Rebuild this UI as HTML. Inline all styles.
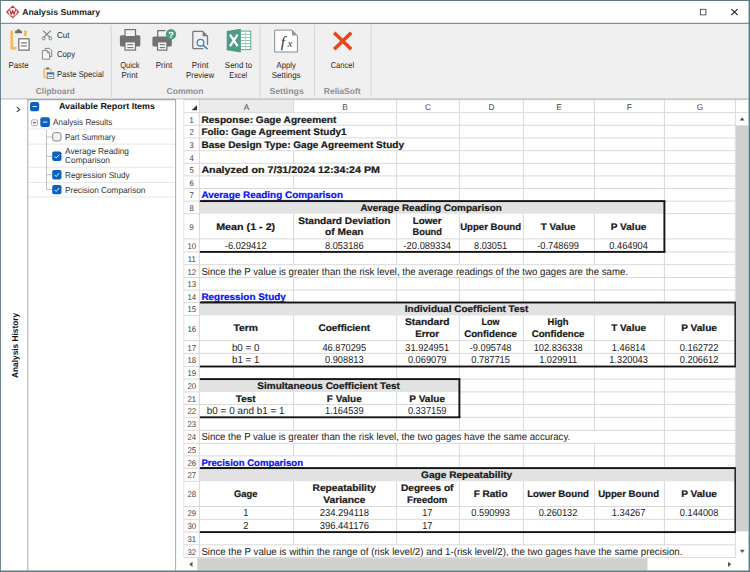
<!DOCTYPE html>
<html><head><meta charset="utf-8"><title>Analysis Summary</title>
<style>
html,body{margin:0;padding:0;background:#fff;}
body{width:750px;height:572px;overflow:hidden;font-family:"Liberation Sans",sans-serif;}
svg{display:block;font-family:"Liberation Sans",sans-serif;}
svg text{white-space:pre;text-rendering:geometricPrecision;}
</style></head><body>
<svg width="750" height="572" viewBox="0 0 750 572">
<rect x="0" y="0" width="750" height="572" fill="#ffffff"/>
<rect x="0" y="23.8" width="750" height="74.6" fill="#f0f0f0"/>
<rect x="0" y="22.8" width="750" height="1" fill="#5f7b82"/>
<rect x="0" y="98.35" width="750" height="1.1" fill="#bebebe"/>
<g id="title">
<path d="M6.75 11.95 L12.65 6.25 L18.55 11.95 L12.65 17.65 Z" fill="#f3d4d5" stroke="#c23d43" stroke-width="1.2" stroke-linejoin="round"/>
<circle cx="12.65" cy="11.95" r="3.9" fill="#fdf6f6"/>
<path d="M9.65 9.45 L11.15 14.45 L12.65 10.75 L14.15 14.45 L15.65 9.45" fill="none" stroke="#b3242b" stroke-width="1.05" stroke-linejoin="miter"/>
<text x="22.3" y="14.7" font-size="8.6" font-weight="bold" text-anchor="start" textLength="77.7" lengthAdjust="spacingAndGlyphs" fill="#1e1e1e">Analysis Summary</text>
<rect x="700.3" y="9.3" width="5.6" height="5.6" fill="none" stroke="#333" stroke-width="0.8"/>
<path d="M731.4 9.2 L737.6 15 M737.6 9.2 L731.4 15" stroke="#2a2a2a" stroke-width="1.1" fill="none"/>
</g>
<g id="ribbon">
<rect x="110.7" y="25" width="1" height="72" fill="#d4d4d4"/>
<rect x="259.4" y="25" width="1" height="72" fill="#d4d4d4"/>
<rect x="314.2" y="25" width="1" height="72" fill="#d4d4d4"/>
<rect x="370.5" y="25" width="1" height="72" fill="#d4d4d4"/>
<path d="M10.3 30.5 H13.2 V46.7 H16.4 V49.7 H10.3 Z" fill="#eebd6b"/>
<rect x="23.9" y="30.5" width="2.9" height="5.5" fill="#eebd6b"/>
<path d="M15 33.3 V31.7 Q15 30.5 16.3 30.5 H16.7 Q17 28.9 18.5 28.9 Q20 28.9 20.3 30.5 H20.7 Q22 30.5 22 31.7 V33.3 Z" fill="#6e6e6e"/>
<rect x="18.8" y="38.8" width="10.3" height="11.3" fill="#fff" stroke="#6e6e6e" stroke-width="1.2"/>
<rect x="20.9" y="42.35" width="6.1" height="1.1" fill="#6e6e6e"/>
<rect x="20.9" y="45.45" width="6.1" height="1.1" fill="#6e6e6e"/>
<text x="18.5" y="68.4" font-size="8.6" text-anchor="middle" textLength="20.2" lengthAdjust="spacingAndGlyphs" fill="#2b2b2b">Paste</text>
<path d="M43 30.6 L50.1 37.4 M50.7 30.6 L43.6 37.4" stroke="#7a7a7a" stroke-width="1.1" fill="none"/>
<circle cx="43.7" cy="38.4" r="1.5" fill="none" stroke="#7a7a7a" stroke-width="0.9"/><circle cx="50.3" cy="38.4" r="1.5" fill="none" stroke="#7a7a7a" stroke-width="0.9"/>
<text x="57" y="38.3" font-size="8.6" text-anchor="start" textLength="12.5" lengthAdjust="spacingAndGlyphs" fill="#2b2b2b">Cut</text>
<path d="M45.2 50.4 V48.4 H49.6 L51.7 50.5 V56.5 H49.8" fill="none" stroke="#7a7a7a" stroke-width="0.9"/>
<path d="M42.4 50.7 H47.5 L49.7 52.9 V59.2 H42.4 Z" fill="#f6f6f6" stroke="#7a7a7a" stroke-width="0.9"/>
<path d="M47.5 50.7 V52.9 H49.7" fill="none" stroke="#7a7a7a" stroke-width="0.8"/>
<text x="57" y="57.2" font-size="8.6" text-anchor="start" textLength="18" lengthAdjust="spacingAndGlyphs" fill="#2b2b2b">Copy</text>
<path d="M43.4 68.3 H45 V76.3 H47 V77.8 H43.4 Z" fill="#eebd6b"/>
<rect x="50.3" y="68.3" width="1.5" height="3.4" fill="#eebd6b"/>
<rect x="45.8" y="67.5" width="3.6" height="2" rx="0.6" fill="#6e6e6e"/>
<rect x="47.2" y="72.9" width="6.6" height="5.7" fill="#fff" stroke="#6e6e6e" stroke-width="0.8"/>
<rect x="46.9" y="72.5" width="7.2" height="2" fill="#3b7bc9"/>
<rect x="48.6" y="76" width="3.8" height="0.8" fill="#6e6e6e"/>
<text x="57" y="77" font-size="8.6" text-anchor="start" textLength="46.7" lengthAdjust="spacingAndGlyphs" fill="#2b2b2b">Paste Special</text>
<text x="55.3" y="94" font-size="8.6" font-weight="bold" text-anchor="middle" textLength="38.9" lengthAdjust="spacingAndGlyphs" fill="#8d9199">Clipboard</text>
<rect x="119.9" y="35.2" width="20.4" height="11.4" rx="1.6" fill="#717171"/>
<rect x="125" y="29.6" width="10.5" height="7" fill="#f0f0f0" stroke="#717171" stroke-width="1.2"/>
<rect x="125" y="41.9" width="10.5" height="8.2" fill="#f7f7f7" stroke="#717171" stroke-width="1.2"/>
<rect x="127.2" y="44.15" width="6.3" height="1.1" fill="#717171"/>
<rect x="127.2" y="47.05" width="6.3" height="1.1" fill="#717171"/>
<text x="129.9" y="68.4" font-size="8.6" text-anchor="middle" textLength="19.3" lengthAdjust="spacingAndGlyphs" fill="#2b2b2b">Quick</text>
<text x="129.6" y="77.9" font-size="8.6" text-anchor="middle" textLength="16.3" lengthAdjust="spacingAndGlyphs" fill="#2b2b2b">Print</text>
<rect x="152.4" y="36.4" width="19.4" height="10.2" rx="1.6" fill="#717171"/>
<path d="M157.7 37 V30.6 H165.5" fill="none" stroke="#717171" stroke-width="1.2"/>
<rect x="157.5" y="41.9" width="9.4" height="8.2" fill="#f7f7f7" stroke="#717171" stroke-width="1.2"/>
<rect x="159.7" y="44.15" width="5.2" height="1.1" fill="#717171"/>
<rect x="159.7" y="47.05" width="5.2" height="1.1" fill="#717171"/>
<circle cx="171" cy="34.2" r="5.2" fill="#519c86"/>
<text x="171" y="37.6" font-size="9" font-weight="bold" text-anchor="middle" fill="#fff">?</text>
<text x="164" y="68.4" font-size="8.6" text-anchor="middle" textLength="16.5" lengthAdjust="spacingAndGlyphs" fill="#2b2b2b">Print</text>
<path d="M192.8 31.4 H202.6 L207.5 36.2 V45 M203.5 48.6 H192.8 Z" fill="none" stroke="#7a7a7a" stroke-width="1.3"/>
<path d="M192.8 31.4 V48.6" stroke="#7a7a7a" stroke-width="1.3"/>
<path d="M202.6 31.4 L207.5 36.2 H202.6 Z" fill="#7a7a7a"/>
<circle cx="200.5" cy="42.7" r="3.3" fill="#f4f8fc" stroke="#4582c6" stroke-width="1.3"/>
<path d="M203 45.2 L207.6 49.2" stroke="#4582c6" stroke-width="1.6"/>
<text x="200.1" y="68.4" font-size="8.6" text-anchor="middle" textLength="16.8" lengthAdjust="spacingAndGlyphs" fill="#2b2b2b">Print</text>
<text x="200.1" y="77.9" font-size="8.6" text-anchor="middle" textLength="28" lengthAdjust="spacingAndGlyphs" fill="#2b2b2b">Preview</text>
<rect x="240" y="31.1" width="10.8" height="18.6" fill="#fff" stroke="#4c9b84" stroke-width="0.9"/>
<rect x="241" y="33.85" width="9.8" height="0.9" fill="#7fb9a7"/>
<rect x="241" y="36.95" width="9.8" height="0.9" fill="#7fb9a7"/>
<rect x="241" y="40.05" width="9.8" height="0.9" fill="#7fb9a7"/>
<rect x="241" y="43.15" width="9.8" height="0.9" fill="#7fb9a7"/>
<rect x="241" y="46.25" width="9.8" height="0.9" fill="#7fb9a7"/>
<rect x="245.2" y="31.1" width="0.8" height="18.6" fill="#a8d0c4"/>
<path d="M226.7 31.1 L240.8 28.7 V52.5 L226.7 50.2 Z" fill="#4c9b84"/>
<path d="M230 34.6 L237.6 46.2 M237.6 34.6 L230 46.2" stroke="#fff" stroke-width="2.3" fill="none"/>
<text x="238.5" y="68.4" font-size="8.6" text-anchor="middle" textLength="27.3" lengthAdjust="spacingAndGlyphs" fill="#2b2b2b">Send to</text>
<text x="238.2" y="77.9" font-size="8.6" text-anchor="middle" textLength="17.8" lengthAdjust="spacingAndGlyphs" fill="#2b2b2b">Excel</text>
<text x="185" y="94" font-size="8.6" font-weight="bold" text-anchor="middle" textLength="37" lengthAdjust="spacingAndGlyphs" fill="#8d9199">Common</text>
<path d="M274.7 30.1 H292 L297.4 35.5 V52 H274.7 Z" fill="#fff" stroke="#8a8a8a" stroke-width="1"/>
<path d="M292 30.1 L297.4 35.5 H292 Z" fill="#9a9a9a"/>
<text x="280.8" y="47.3" font-family="Liberation Serif, serif" font-style="italic" font-size="15.5" fill="#333">f</text>
<text x="287.6" y="47.3" font-family="Liberation Serif, serif" font-style="italic" font-size="11" fill="#333">x</text>
<text x="286.2" y="68.4" font-size="8.6" text-anchor="middle" textLength="19.2" lengthAdjust="spacingAndGlyphs" fill="#2b2b2b">Apply</text>
<text x="286.2" y="77.9" font-size="8.6" text-anchor="middle" textLength="28.8" lengthAdjust="spacingAndGlyphs" fill="#2b2b2b">Settings</text>
<text x="286.6" y="94" font-size="8.6" font-weight="bold" text-anchor="middle" textLength="34.4" lengthAdjust="spacingAndGlyphs" fill="#8d9199">Settings</text>
<path d="M334.2 32.8 L351.2 49.3 M351.2 32.8 L334.2 49.3" stroke="#e8461c" stroke-width="3.6" fill="none"/>
<text x="342.4" y="68.4" font-size="8.6" text-anchor="middle" textLength="23.5" lengthAdjust="spacingAndGlyphs" fill="#2b2b2b">Cancel</text>
<text x="342.2" y="94" font-size="8.6" font-weight="bold" text-anchor="middle" textLength="36.8" lengthAdjust="spacingAndGlyphs" fill="#8d9199">ReliaSoft</text>
</g>
<g id="left">
<rect x="27.3" y="99.5" width="1" height="471.2" fill="#a9a9b6"/>
<rect x="175.1" y="99.5" width="1" height="471.2" fill="#a9a9b6"/>
<rect x="27.3" y="99.2" width="148.8" height="1" fill="#9494a2"/>
<path d="M16.7 106.9 L19.7 109.4 L16.7 111.9" fill="none" stroke="#3a3a3a" stroke-width="1.1"/>
<text transform="translate(17.6 345.4) rotate(-90)" x="0" y="0" font-size="8.6" font-weight="bold" text-anchor="middle" textLength="65.3" lengthAdjust="spacingAndGlyphs" fill="#111">Analysis History</text>
<rect x="30" y="102" width="9.2" height="9.2" rx="2.2" fill="#0b60c1"/>
<rect x="32.5" y="106.15" width="4.2" height="0.9" fill="#fff"/>
<text x="107" y="109" font-size="8.6" font-weight="bold" text-anchor="middle" textLength="96" lengthAdjust="spacingAndGlyphs" fill="#111">Available Report Items</text>
<rect x="28.3" y="128.5" width="146.8" height="1" fill="#e6e6e6"/>
<rect x="28.3" y="143.6" width="146.8" height="1" fill="#e6e6e6"/>
<rect x="28.3" y="166.7" width="146.8" height="1" fill="#e6e6e6"/>
<rect x="28.3" y="181.9" width="146.8" height="1" fill="#e6e6e6"/>
<rect x="28.3" y="196.5" width="146.8" height="1" fill="#e6e6e6"/>
<rect x="31.6" y="119.8" width="5.9" height="5.9" rx="1" fill="#fbfbfb" stroke="#9b9b9b" stroke-width="0.8"/>
<rect x="33" y="122.25" width="3.1" height="1" fill="#444"/>
<rect x="40.3" y="117.3" width="9.6" height="9.6" rx="2.2" fill="#0b60c1"/>
<rect x="42.8" y="121.65" width="4.6" height="0.9" fill="#fff"/>
<text x="53" y="124.6" font-size="8.6" text-anchor="start" textLength="59.4" lengthAdjust="spacingAndGlyphs" fill="#333">Analysis Results</text>
<rect x="46.1" y="129.8" width="0.8" height="59.8" fill="#b2b2b2"/>
<rect x="46.5" y="136.6" width="5.7" height="0.8" fill="#b2b2b2"/>
<rect x="46.5" y="155.9" width="5.7" height="0.8" fill="#b2b2b2"/>
<rect x="46.5" y="174.4" width="5.7" height="0.8" fill="#b2b2b2"/>
<rect x="46.5" y="189.2" width="5.7" height="0.8" fill="#b2b2b2"/>
<rect x="52.7" y="132.7" width="8.3" height="8.3" rx="2" fill="#f1f1f1" stroke="#7d7d7d" stroke-width="0.9"/>
<text x="65" y="139.6" font-size="8.6" text-anchor="start" textLength="50.4" lengthAdjust="spacingAndGlyphs" fill="#333">Part Summary</text>
<rect x="52.2" y="151.6" width="9.3" height="9.3" rx="2" fill="#0b60c1"/>
<path d="M54.6 156.4 L56.2 158 L59.2 154.6" fill="none" stroke="#fff" stroke-width="0.9"/>
<text x="65" y="154" font-size="8.6" text-anchor="start" textLength="64" lengthAdjust="spacingAndGlyphs" fill="#333">Average Reading</text>
<text x="65" y="163.4" font-size="8.6" text-anchor="start" textLength="45" lengthAdjust="spacingAndGlyphs" fill="#333">Comparison</text>
<rect x="52.2" y="170.1" width="9.3" height="9.3" rx="2" fill="#0b60c1"/>
<path d="M54.6 174.9 L56.2 176.5 L59.2 173.1" fill="none" stroke="#fff" stroke-width="0.9"/>
<text x="65" y="177.6" font-size="8.6" text-anchor="start" textLength="64.6" lengthAdjust="spacingAndGlyphs" fill="#333">Regression Study</text>
<rect x="52.2" y="185" width="9.3" height="9.3" rx="2" fill="#0b60c1"/>
<path d="M54.6 189.8 L56.2 191.4 L59.2 188" fill="none" stroke="#fff" stroke-width="0.9"/>
<text x="65" y="192.6" font-size="8.6" text-anchor="start" textLength="80.4" lengthAdjust="spacingAndGlyphs" fill="#333">Precision Comparison</text>
</g>
<g id="sheet">
<rect x="199.4" y="100.1" width="94.2" height="12.6" fill="#ebebeb"/>
<rect x="199.4" y="201.1" width="465" height="12.6" fill="#e2e2e2"/>
<rect x="199.4" y="302.5" width="536" height="13" fill="#e2e2e2"/>
<rect x="199.4" y="379.1" width="260" height="12.8" fill="#e2e2e2"/>
<rect x="199.4" y="468.1" width="536" height="13.2" fill="#e2e2e2"/>
<rect x="183.8" y="112.2" width="564.6" height="1" fill="#d9d9d9"/>
<rect x="183.8" y="124.8" width="551.6" height="1" fill="#d9d9d9"/>
<rect x="183.8" y="137.4" width="551.6" height="1" fill="#d9d9d9"/>
<rect x="183.8" y="150.2" width="551.6" height="1" fill="#d9d9d9"/>
<rect x="183.8" y="162.8" width="551.6" height="1" fill="#d9d9d9"/>
<rect x="183.8" y="175.4" width="551.6" height="1" fill="#d9d9d9"/>
<rect x="183.8" y="188" width="551.6" height="1" fill="#d9d9d9"/>
<rect x="183.8" y="200.6" width="551.6" height="1" fill="#d9d9d9"/>
<rect x="183.8" y="213.2" width="15.6" height="1" fill="#d9d9d9"/>
<rect x="664.4" y="213.2" width="71" height="1" fill="#d9d9d9"/>
<rect x="183.8" y="238.4" width="551.6" height="1" fill="#d9d9d9"/>
<rect x="183.8" y="251.4" width="551.6" height="1" fill="#d9d9d9"/>
<rect x="183.8" y="264.2" width="551.6" height="1" fill="#d9d9d9"/>
<rect x="183.8" y="277" width="551.6" height="1" fill="#d9d9d9"/>
<rect x="183.8" y="289.6" width="551.6" height="1" fill="#d9d9d9"/>
<rect x="183.8" y="302" width="551.6" height="1" fill="#d9d9d9"/>
<rect x="183.8" y="315" width="15.6" height="1" fill="#d9d9d9"/>
<rect x="183.8" y="340.2" width="551.6" height="1" fill="#d9d9d9"/>
<rect x="183.8" y="352.9" width="551.6" height="1" fill="#d9d9d9"/>
<rect x="183.8" y="366" width="551.6" height="1" fill="#d9d9d9"/>
<rect x="183.8" y="378.6" width="551.6" height="1" fill="#d9d9d9"/>
<rect x="183.8" y="391.4" width="15.6" height="1" fill="#d9d9d9"/>
<rect x="459.4" y="391.4" width="276" height="1" fill="#d9d9d9"/>
<rect x="183.8" y="404" width="551.6" height="1" fill="#d9d9d9"/>
<rect x="183.8" y="416.8" width="551.6" height="1" fill="#d9d9d9"/>
<rect x="183.8" y="429.8" width="551.6" height="1" fill="#d9d9d9"/>
<rect x="183.8" y="442.8" width="551.6" height="1" fill="#d9d9d9"/>
<rect x="183.8" y="455.4" width="551.6" height="1" fill="#d9d9d9"/>
<rect x="183.8" y="467.6" width="551.6" height="1" fill="#d9d9d9"/>
<rect x="183.8" y="480.8" width="15.6" height="1" fill="#d9d9d9"/>
<rect x="183.8" y="506" width="551.6" height="1" fill="#d9d9d9"/>
<rect x="183.8" y="518.8" width="551.6" height="1" fill="#d9d9d9"/>
<rect x="183.8" y="531.6" width="551.6" height="1" fill="#d9d9d9"/>
<rect x="183.8" y="544.3" width="551.6" height="1" fill="#d9d9d9"/>
<rect x="183.8" y="557.1" width="551.6" height="1" fill="#d9d9d9"/>
<rect x="183.3" y="99.6" width="1" height="458" fill="#e0e0e0"/>
<rect x="198.9" y="99.6" width="1" height="458" fill="#d9d9d9"/>
<rect x="293.1" y="99.6" width="1" height="13.1" fill="#d9d9d9"/>
<rect x="293.1" y="150.7" width="1" height="12.6" fill="#d9d9d9"/>
<rect x="293.1" y="175.9" width="1" height="12.6" fill="#d9d9d9"/>
<rect x="293.1" y="213.7" width="1" height="51" fill="#d9d9d9"/>
<rect x="293.1" y="277.5" width="1" height="25" fill="#d9d9d9"/>
<rect x="293.1" y="315.5" width="1" height="63.6" fill="#d9d9d9"/>
<rect x="293.1" y="391.9" width="1" height="38.4" fill="#d9d9d9"/>
<rect x="293.1" y="443.3" width="1" height="12.6" fill="#d9d9d9"/>
<rect x="293.1" y="481.3" width="1" height="63.5" fill="#d9d9d9"/>
<rect x="396.1" y="99.6" width="1" height="13.1" fill="#d9d9d9"/>
<rect x="396.1" y="112.7" width="1" height="25.2" fill="#d9d9d9"/>
<rect x="396.1" y="150.7" width="1" height="50.4" fill="#d9d9d9"/>
<rect x="396.1" y="213.7" width="1" height="51" fill="#d9d9d9"/>
<rect x="396.1" y="277.5" width="1" height="25" fill="#d9d9d9"/>
<rect x="396.1" y="315.5" width="1" height="63.6" fill="#d9d9d9"/>
<rect x="396.1" y="391.9" width="1" height="38.4" fill="#d9d9d9"/>
<rect x="396.1" y="443.3" width="1" height="24.8" fill="#d9d9d9"/>
<rect x="396.1" y="481.3" width="1" height="63.5" fill="#d9d9d9"/>
<rect x="458.9" y="99.6" width="1" height="13.1" fill="#d9d9d9"/>
<rect x="458.9" y="112.7" width="1" height="88.4" fill="#d9d9d9"/>
<rect x="458.9" y="213.7" width="1" height="51" fill="#d9d9d9"/>
<rect x="458.9" y="277.5" width="1" height="25" fill="#d9d9d9"/>
<rect x="458.9" y="315.5" width="1" height="114.8" fill="#d9d9d9"/>
<rect x="458.9" y="443.3" width="1" height="24.8" fill="#d9d9d9"/>
<rect x="458.9" y="481.3" width="1" height="63.5" fill="#d9d9d9"/>
<rect x="522.9" y="99.6" width="1" height="13.1" fill="#d9d9d9"/>
<rect x="522.9" y="112.7" width="1" height="88.4" fill="#d9d9d9"/>
<rect x="522.9" y="213.7" width="1" height="51" fill="#d9d9d9"/>
<rect x="522.9" y="277.5" width="1" height="25" fill="#d9d9d9"/>
<rect x="522.9" y="315.5" width="1" height="114.8" fill="#d9d9d9"/>
<rect x="522.9" y="443.3" width="1" height="24.8" fill="#d9d9d9"/>
<rect x="522.9" y="481.3" width="1" height="63.5" fill="#d9d9d9"/>
<rect x="593.9" y="99.6" width="1" height="13.1" fill="#d9d9d9"/>
<rect x="593.9" y="112.7" width="1" height="88.4" fill="#d9d9d9"/>
<rect x="593.9" y="213.7" width="1" height="51" fill="#d9d9d9"/>
<rect x="593.9" y="277.5" width="1" height="25" fill="#d9d9d9"/>
<rect x="593.9" y="315.5" width="1" height="114.8" fill="#d9d9d9"/>
<rect x="593.9" y="443.3" width="1" height="24.8" fill="#d9d9d9"/>
<rect x="593.9" y="481.3" width="1" height="63.5" fill="#d9d9d9"/>
<rect x="663.9" y="99.6" width="1" height="13.1" fill="#d9d9d9"/>
<rect x="663.9" y="112.7" width="1" height="189.8" fill="#d9d9d9"/>
<rect x="663.9" y="315.5" width="1" height="152.6" fill="#d9d9d9"/>
<rect x="663.9" y="481.3" width="1" height="63.5" fill="#d9d9d9"/>
<rect x="734.9" y="99.6" width="1" height="13.1" fill="#d9d9d9"/>
<rect x="734.9" y="112.7" width="1" height="444.9" fill="#d9d9d9"/>
<rect x="183.8" y="99.1" width="564.6" height="1" fill="#c8c8c8"/>
<path d="M197 105 V110.2 H191.6 Z" fill="#333"/>
<text x="246.5" y="109.6" font-size="8.3" text-anchor="middle" textLength="5.54" lengthAdjust="spacingAndGlyphs" fill="#444">A</text>
<text x="345.1" y="109.6" font-size="8.3" text-anchor="middle" textLength="5.54" lengthAdjust="spacingAndGlyphs" fill="#444">B</text>
<text x="428" y="109.6" font-size="8.3" text-anchor="middle" textLength="5.99" lengthAdjust="spacingAndGlyphs" fill="#444">C</text>
<text x="491.4" y="109.6" font-size="8.3" text-anchor="middle" textLength="5.99" lengthAdjust="spacingAndGlyphs" fill="#444">D</text>
<text x="558.9" y="109.6" font-size="8.3" text-anchor="middle" textLength="5.54" lengthAdjust="spacingAndGlyphs" fill="#444">E</text>
<text x="629.4" y="109.6" font-size="8.3" text-anchor="middle" textLength="5.07" lengthAdjust="spacingAndGlyphs" fill="#444">F</text>
<text x="699.9" y="109.6" font-size="8.3" text-anchor="middle" textLength="6.46" lengthAdjust="spacingAndGlyphs" fill="#444">G</text>
<text x="191.7" y="122.6" font-size="8.3" text-anchor="middle" textLength="4.29" lengthAdjust="spacingAndGlyphs" fill="#3c3c3c">1</text>
<text x="191.7" y="135.2" font-size="8.3" text-anchor="middle" textLength="4.29" lengthAdjust="spacingAndGlyphs" fill="#3c3c3c">2</text>
<text x="191.7" y="147.8" font-size="8.3" text-anchor="middle" textLength="4.29" lengthAdjust="spacingAndGlyphs" fill="#3c3c3c">3</text>
<text x="191.7" y="160.6" font-size="8.3" text-anchor="middle" textLength="4.29" lengthAdjust="spacingAndGlyphs" fill="#3c3c3c">4</text>
<text x="191.7" y="173.2" font-size="8.3" text-anchor="middle" textLength="4.29" lengthAdjust="spacingAndGlyphs" fill="#3c3c3c">5</text>
<text x="191.7" y="185.8" font-size="8.3" text-anchor="middle" textLength="4.29" lengthAdjust="spacingAndGlyphs" fill="#3c3c3c">6</text>
<text x="191.7" y="198.4" font-size="8.3" text-anchor="middle" textLength="4.29" lengthAdjust="spacingAndGlyphs" fill="#3c3c3c">7</text>
<text x="191.7" y="211" font-size="8.3" text-anchor="middle" textLength="4.29" lengthAdjust="spacingAndGlyphs" fill="#3c3c3c">8</text>
<text x="191.7" y="229.7" font-size="8.3" text-anchor="middle" textLength="4.29" lengthAdjust="spacingAndGlyphs" fill="#3c3c3c">9</text>
<text x="191.7" y="248.8" font-size="8.3" text-anchor="middle" textLength="8.59" lengthAdjust="spacingAndGlyphs" fill="#3c3c3c">10</text>
<text x="191.7" y="261.8" font-size="8.3" text-anchor="middle" textLength="8.01" lengthAdjust="spacingAndGlyphs" fill="#3c3c3c">11</text>
<text x="191.7" y="274.6" font-size="8.3" text-anchor="middle" textLength="8.59" lengthAdjust="spacingAndGlyphs" fill="#3c3c3c">12</text>
<text x="191.7" y="287.4" font-size="8.3" text-anchor="middle" textLength="8.59" lengthAdjust="spacingAndGlyphs" fill="#3c3c3c">13</text>
<text x="191.7" y="300" font-size="8.3" text-anchor="middle" textLength="8.59" lengthAdjust="spacingAndGlyphs" fill="#3c3c3c">14</text>
<text x="191.7" y="312.4" font-size="8.3" text-anchor="middle" textLength="8.59" lengthAdjust="spacingAndGlyphs" fill="#3c3c3c">15</text>
<text x="191.7" y="331.5" font-size="8.3" text-anchor="middle" textLength="8.59" lengthAdjust="spacingAndGlyphs" fill="#3c3c3c">16</text>
<text x="191.7" y="350.6" font-size="8.3" text-anchor="middle" textLength="8.59" lengthAdjust="spacingAndGlyphs" fill="#3c3c3c">17</text>
<text x="191.7" y="363.3" font-size="8.3" text-anchor="middle" textLength="8.59" lengthAdjust="spacingAndGlyphs" fill="#3c3c3c">18</text>
<text x="191.7" y="376.4" font-size="8.3" text-anchor="middle" textLength="8.59" lengthAdjust="spacingAndGlyphs" fill="#3c3c3c">19</text>
<text x="191.7" y="389" font-size="8.3" text-anchor="middle" textLength="8.59" lengthAdjust="spacingAndGlyphs" fill="#3c3c3c">20</text>
<text x="191.7" y="401.8" font-size="8.3" text-anchor="middle" textLength="8.59" lengthAdjust="spacingAndGlyphs" fill="#3c3c3c">21</text>
<text x="191.7" y="414.4" font-size="8.3" text-anchor="middle" textLength="8.59" lengthAdjust="spacingAndGlyphs" fill="#3c3c3c">22</text>
<text x="191.7" y="427.2" font-size="8.3" text-anchor="middle" textLength="8.59" lengthAdjust="spacingAndGlyphs" fill="#3c3c3c">23</text>
<text x="191.7" y="440.2" font-size="8.3" text-anchor="middle" textLength="8.59" lengthAdjust="spacingAndGlyphs" fill="#3c3c3c">24</text>
<text x="191.7" y="453.2" font-size="8.3" text-anchor="middle" textLength="8.59" lengthAdjust="spacingAndGlyphs" fill="#3c3c3c">25</text>
<text x="191.7" y="465.8" font-size="8.3" text-anchor="middle" textLength="8.59" lengthAdjust="spacingAndGlyphs" fill="#3c3c3c">26</text>
<text x="191.7" y="478" font-size="8.3" text-anchor="middle" textLength="8.59" lengthAdjust="spacingAndGlyphs" fill="#3c3c3c">27</text>
<text x="191.7" y="497.3" font-size="8.3" text-anchor="middle" textLength="8.59" lengthAdjust="spacingAndGlyphs" fill="#3c3c3c">28</text>
<text x="191.7" y="516.4" font-size="8.3" text-anchor="middle" textLength="8.59" lengthAdjust="spacingAndGlyphs" fill="#3c3c3c">29</text>
<text x="191.7" y="529.2" font-size="8.3" text-anchor="middle" textLength="8.59" lengthAdjust="spacingAndGlyphs" fill="#3c3c3c">30</text>
<text x="191.7" y="542" font-size="8.3" text-anchor="middle" textLength="8.59" lengthAdjust="spacingAndGlyphs" fill="#3c3c3c">31</text>
<text x="191.7" y="554.7" font-size="8.3" text-anchor="middle" textLength="8.59" lengthAdjust="spacingAndGlyphs" fill="#3c3c3c">32</text>
<text x="201.4" y="122.5" font-size="9.5" font-weight="bold" text-anchor="start" textLength="135" lengthAdjust="spacingAndGlyphs" fill="#1a1a1a" stroke="#1a1a1a" stroke-width="0.22">Response: Gage Agreement</text>
<text x="201.4" y="135.1" font-size="9.5" font-weight="bold" text-anchor="start" textLength="145.2" lengthAdjust="spacingAndGlyphs" fill="#1a1a1a" stroke="#1a1a1a" stroke-width="0.22">Folio: Gage Agreement Study1</text>
<text x="201.4" y="147.7" font-size="9.5" font-weight="bold" text-anchor="start" textLength="202.6" lengthAdjust="spacingAndGlyphs" fill="#1a1a1a" stroke="#1a1a1a" stroke-width="0.22">Base Design Type: Gage Agreement Study</text>
<text x="201.4" y="173.1" font-size="9.5" font-weight="bold" text-anchor="start" textLength="178.6" lengthAdjust="spacingAndGlyphs" fill="#1a1a1a" stroke="#1a1a1a" stroke-width="0.22">Analyzed on 7/31/2024 12:34:24 PM</text>
<text x="201.4" y="198.3" font-size="9.5" font-weight="bold" text-anchor="start" textLength="141.6" lengthAdjust="spacingAndGlyphs" fill="#0a14f0" stroke="#0a14f0" stroke-width="0.22">Average Reading Comparison</text>
<rect x="201.4" y="199.9" width="141.6" height="0.8" fill="#0a14f0"/>
<text x="431.1" y="210.9" font-size="9.5" font-weight="bold" text-anchor="middle" textLength="141.4" lengthAdjust="spacingAndGlyphs" fill="#1a1a1a" stroke="#1a1a1a" stroke-width="0.22">Average Reading Comparison</text>
<text x="245.7" y="229.6" font-size="9.5" font-weight="bold" text-anchor="middle" textLength="59" lengthAdjust="spacingAndGlyphs" fill="#1a1a1a" stroke="#1a1a1a" stroke-width="0.22">Mean (1 - 2)</text>
<text x="344.3" y="223.5" font-size="9.5" font-weight="bold" text-anchor="middle" textLength="92.2" lengthAdjust="spacingAndGlyphs" fill="#1a1a1a" stroke="#1a1a1a" stroke-width="0.22">Standard Deviation</text>
<text x="344.3" y="235.2" font-size="9.5" font-weight="bold" text-anchor="middle" textLength="38.4" lengthAdjust="spacingAndGlyphs" fill="#1a1a1a" stroke="#1a1a1a" stroke-width="0.22">of Mean</text>
<text x="427.2" y="223.5" font-size="9.5" font-weight="bold" text-anchor="middle" textLength="29" lengthAdjust="spacingAndGlyphs" fill="#1a1a1a" stroke="#1a1a1a" stroke-width="0.22">Lower</text>
<text x="427.2" y="235.2" font-size="9.5" font-weight="bold" text-anchor="middle" textLength="29.4" lengthAdjust="spacingAndGlyphs" fill="#1a1a1a" stroke="#1a1a1a" stroke-width="0.22">Bound</text>
<text x="490.6" y="229.6" font-size="9.5" font-weight="bold" text-anchor="middle" textLength="60.9" lengthAdjust="spacingAndGlyphs" fill="#1a1a1a" stroke="#1a1a1a" stroke-width="0.22">Upper Bound</text>
<text x="558.1" y="229.6" font-size="9.5" font-weight="bold" text-anchor="middle" textLength="34.8" lengthAdjust="spacingAndGlyphs" fill="#1a1a1a" stroke="#1a1a1a" stroke-width="0.22">T Value</text>
<text x="628.6" y="229.6" font-size="9.5" font-weight="bold" text-anchor="middle" textLength="35.8" lengthAdjust="spacingAndGlyphs" fill="#1a1a1a" stroke="#1a1a1a" stroke-width="0.22">P Value</text>
<text x="245.7" y="248.7" font-size="10.2" text-anchor="middle" textLength="41.71" lengthAdjust="spacingAndGlyphs" fill="#1a1a1a">-6.029412</text>
<text x="344.3" y="248.7" font-size="10.2" text-anchor="middle" textLength="38.63" lengthAdjust="spacingAndGlyphs" fill="#1a1a1a">8.053186</text>
<text x="427.2" y="248.7" font-size="10.2" text-anchor="middle" textLength="47.4" lengthAdjust="spacingAndGlyphs" fill="#1a1a1a">-20.089334</text>
<text x="490.6" y="248.7" font-size="10.2" text-anchor="middle" textLength="33" lengthAdjust="spacingAndGlyphs" fill="#1a1a1a">8.03051</text>
<text x="558.1" y="248.7" font-size="10.2" text-anchor="middle" textLength="41.71" lengthAdjust="spacingAndGlyphs" fill="#1a1a1a">-0.748699</text>
<text x="628.6" y="248.7" font-size="10.2" text-anchor="middle" textLength="38.63" lengthAdjust="spacingAndGlyphs" fill="#1a1a1a">0.464904</text>
<text x="201.4" y="274.5" font-size="10.2" text-anchor="start" textLength="426.6" lengthAdjust="spacingAndGlyphs" fill="#1a1a1a">Since the P value is greater than the risk level, the average readings of the two gages are the same.</text>
<text x="201.4" y="299.9" font-size="9.5" font-weight="bold" text-anchor="start" textLength="84.4" lengthAdjust="spacingAndGlyphs" fill="#0a14f0" stroke="#0a14f0" stroke-width="0.22">Regression Study</text>
<rect x="201.4" y="301.5" width="84.4" height="0.8" fill="#0a14f0"/>
<text x="466.6" y="312.3" font-size="9.5" font-weight="bold" text-anchor="middle" textLength="123.6" lengthAdjust="spacingAndGlyphs" fill="#1a1a1a" stroke="#1a1a1a" stroke-width="0.22">Individual Coefficient Test</text>
<text x="245.7" y="331.4" font-size="9.5" font-weight="bold" text-anchor="middle" textLength="24.6" lengthAdjust="spacingAndGlyphs" fill="#1a1a1a" stroke="#1a1a1a" stroke-width="0.22">Term</text>
<text x="344.3" y="331.4" font-size="9.5" font-weight="bold" text-anchor="middle" textLength="51.6" lengthAdjust="spacingAndGlyphs" fill="#1a1a1a" stroke="#1a1a1a" stroke-width="0.22">Coefficient</text>
<text x="427.2" y="325.3" font-size="9.5" font-weight="bold" text-anchor="middle" textLength="44.4" lengthAdjust="spacingAndGlyphs" fill="#1a1a1a" stroke="#1a1a1a" stroke-width="0.22">Standard</text>
<text x="427.2" y="337" font-size="9.5" font-weight="bold" text-anchor="middle" textLength="24" lengthAdjust="spacingAndGlyphs" fill="#1a1a1a" stroke="#1a1a1a" stroke-width="0.22">Error</text>
<text x="490.6" y="325.3" font-size="9.5" font-weight="bold" text-anchor="middle" textLength="18" lengthAdjust="spacingAndGlyphs" fill="#1a1a1a" stroke="#1a1a1a" stroke-width="0.22">Low</text>
<text x="490.6" y="337" font-size="9.5" font-weight="bold" text-anchor="middle" textLength="52.8" lengthAdjust="spacingAndGlyphs" fill="#1a1a1a" stroke="#1a1a1a" stroke-width="0.22">Confidence</text>
<text x="558.1" y="325.3" font-size="9.5" font-weight="bold" text-anchor="middle" textLength="21" lengthAdjust="spacingAndGlyphs" fill="#1a1a1a" stroke="#1a1a1a" stroke-width="0.22">High</text>
<text x="558.1" y="337" font-size="9.5" font-weight="bold" text-anchor="middle" textLength="52.8" lengthAdjust="spacingAndGlyphs" fill="#1a1a1a" stroke="#1a1a1a" stroke-width="0.22">Confidence</text>
<text x="628.6" y="331.4" font-size="9.5" font-weight="bold" text-anchor="middle" textLength="34.8" lengthAdjust="spacingAndGlyphs" fill="#1a1a1a" stroke="#1a1a1a" stroke-width="0.22">T Value</text>
<text x="699.1" y="331.4" font-size="9.5" font-weight="bold" text-anchor="middle" textLength="35.8" lengthAdjust="spacingAndGlyphs" fill="#1a1a1a" stroke="#1a1a1a" stroke-width="0.22">P Value</text>
<text x="245.7" y="350.5" font-size="10.2" text-anchor="middle" textLength="27.6" lengthAdjust="spacingAndGlyphs" fill="#1a1a1a">b0 = 0</text>
<text x="344.3" y="350.5" font-size="10.2" text-anchor="middle" textLength="43.78" lengthAdjust="spacingAndGlyphs" fill="#1a1a1a">46.870295</text>
<text x="427.2" y="350.5" font-size="10.2" text-anchor="middle" textLength="43.78" lengthAdjust="spacingAndGlyphs" fill="#1a1a1a">31.924951</text>
<text x="490.6" y="350.5" font-size="10.2" text-anchor="middle" textLength="41.71" lengthAdjust="spacingAndGlyphs" fill="#1a1a1a">-9.095748</text>
<text x="558.1" y="350.5" font-size="10.2" text-anchor="middle" textLength="48.9" lengthAdjust="spacingAndGlyphs" fill="#1a1a1a">102.836338</text>
<text x="628.6" y="350.5" font-size="10.2" text-anchor="middle" textLength="33.6" lengthAdjust="spacingAndGlyphs" fill="#1a1a1a">1.46814</text>
<text x="699.1" y="350.5" font-size="10.2" text-anchor="middle" textLength="38.63" lengthAdjust="spacingAndGlyphs" fill="#1a1a1a">0.162722</text>
<text x="245.7" y="363.2" font-size="10.2" text-anchor="middle" textLength="27.2" lengthAdjust="spacingAndGlyphs" fill="#1a1a1a">b1 = 1</text>
<text x="344.3" y="363.2" font-size="10.2" text-anchor="middle" textLength="38.63" lengthAdjust="spacingAndGlyphs" fill="#1a1a1a">0.908813</text>
<text x="427.2" y="363.2" font-size="10.2" text-anchor="middle" textLength="38.63" lengthAdjust="spacingAndGlyphs" fill="#1a1a1a">0.069079</text>
<text x="490.6" y="363.2" font-size="10.2" text-anchor="middle" textLength="38.63" lengthAdjust="spacingAndGlyphs" fill="#1a1a1a">0.787715</text>
<text x="558.1" y="363.2" font-size="10.2" text-anchor="middle" textLength="37.94" lengthAdjust="spacingAndGlyphs" fill="#1a1a1a">1.029911</text>
<text x="628.6" y="363.2" font-size="10.2" text-anchor="middle" textLength="38.63" lengthAdjust="spacingAndGlyphs" fill="#1a1a1a">1.320043</text>
<text x="699.1" y="363.2" font-size="10.2" text-anchor="middle" textLength="38.63" lengthAdjust="spacingAndGlyphs" fill="#1a1a1a">0.206612</text>
<text x="328.6" y="388.9" font-size="9.5" font-weight="bold" text-anchor="middle" textLength="142.6" lengthAdjust="spacingAndGlyphs" fill="#1a1a1a" stroke="#1a1a1a" stroke-width="0.22">Simultaneous Coefficient Test</text>
<text x="245.7" y="401.7" font-size="9.5" font-weight="bold" text-anchor="middle" textLength="19.8" lengthAdjust="spacingAndGlyphs" fill="#1a1a1a" stroke="#1a1a1a" stroke-width="0.22">Test</text>
<text x="344.3" y="401.7" font-size="9.5" font-weight="bold" text-anchor="middle" textLength="34.9" lengthAdjust="spacingAndGlyphs" fill="#1a1a1a" stroke="#1a1a1a" stroke-width="0.22">F Value</text>
<text x="427.2" y="401.7" font-size="9.5" font-weight="bold" text-anchor="middle" textLength="35.8" lengthAdjust="spacingAndGlyphs" fill="#1a1a1a" stroke="#1a1a1a" stroke-width="0.22">P Value</text>
<text x="245.7" y="414.3" font-size="10.2" text-anchor="middle" textLength="77.8" lengthAdjust="spacingAndGlyphs" fill="#1a1a1a">b0 = 0 and b1 = 1</text>
<text x="344.3" y="414.3" font-size="10.2" text-anchor="middle" textLength="38.63" lengthAdjust="spacingAndGlyphs" fill="#1a1a1a">1.164539</text>
<text x="427.2" y="414.3" font-size="10.2" text-anchor="middle" textLength="38.63" lengthAdjust="spacingAndGlyphs" fill="#1a1a1a">0.337159</text>
<text x="201.4" y="440.1" font-size="10.2" text-anchor="start" textLength="368.8" lengthAdjust="spacingAndGlyphs" fill="#1a1a1a">Since the P value is greater than the risk level, the two gages have the same accuracy.</text>
<text x="201.4" y="465.7" font-size="9.5" font-weight="bold" text-anchor="start" textLength="101.6" lengthAdjust="spacingAndGlyphs" fill="#0a14f0" stroke="#0a14f0" stroke-width="0.22">Precision Comparison</text>
<rect x="201.4" y="467.3" width="101.6" height="0.8" fill="#0a14f0"/>
<text x="466.6" y="477.9" font-size="9.5" font-weight="bold" text-anchor="middle" textLength="91.2" lengthAdjust="spacingAndGlyphs" fill="#1a1a1a" stroke="#1a1a1a" stroke-width="0.22">Gage Repeatability</text>
<text x="245.7" y="497.2" font-size="9.5" font-weight="bold" text-anchor="middle" textLength="23.4" lengthAdjust="spacingAndGlyphs" fill="#1a1a1a" stroke="#1a1a1a" stroke-width="0.22">Gage</text>
<text x="344.3" y="491.1" font-size="9.5" font-weight="bold" text-anchor="middle" textLength="63.4" lengthAdjust="spacingAndGlyphs" fill="#1a1a1a" stroke="#1a1a1a" stroke-width="0.22">Repeatability</text>
<text x="344.3" y="502.8" font-size="9.5" font-weight="bold" text-anchor="middle" textLength="42.1" lengthAdjust="spacingAndGlyphs" fill="#1a1a1a" stroke="#1a1a1a" stroke-width="0.22">Variance</text>
<text x="427.2" y="491.1" font-size="9.5" font-weight="bold" text-anchor="middle" textLength="52.6" lengthAdjust="spacingAndGlyphs" fill="#1a1a1a" stroke="#1a1a1a" stroke-width="0.22">Degrees of</text>
<text x="427.2" y="502.8" font-size="9.5" font-weight="bold" text-anchor="middle" textLength="40.3" lengthAdjust="spacingAndGlyphs" fill="#1a1a1a" stroke="#1a1a1a" stroke-width="0.22">Freedom</text>
<text x="490.6" y="497.2" font-size="9.5" font-weight="bold" text-anchor="middle" textLength="33.8" lengthAdjust="spacingAndGlyphs" fill="#1a1a1a" stroke="#1a1a1a" stroke-width="0.22">F Ratio</text>
<text x="558.1" y="497.2" font-size="9.5" font-weight="bold" text-anchor="middle" textLength="61.9" lengthAdjust="spacingAndGlyphs" fill="#1a1a1a" stroke="#1a1a1a" stroke-width="0.22">Lower Bound</text>
<text x="628.6" y="497.2" font-size="9.5" font-weight="bold" text-anchor="middle" textLength="60.9" lengthAdjust="spacingAndGlyphs" fill="#1a1a1a" stroke="#1a1a1a" stroke-width="0.22">Upper Bound</text>
<text x="699.1" y="497.2" font-size="9.5" font-weight="bold" text-anchor="middle" textLength="35.8" lengthAdjust="spacingAndGlyphs" fill="#1a1a1a" stroke="#1a1a1a" stroke-width="0.22">P Value</text>
<text x="245.7" y="516.3" font-size="10.2" text-anchor="middle" textLength="5.15" lengthAdjust="spacingAndGlyphs" fill="#1a1a1a">1</text>
<text x="344.3" y="516.3" font-size="10.2" text-anchor="middle" textLength="49.3" lengthAdjust="spacingAndGlyphs" fill="#1a1a1a">234.294118</text>
<text x="427.2" y="516.3" font-size="10.2" text-anchor="middle" textLength="10.1" lengthAdjust="spacingAndGlyphs" fill="#1a1a1a">17</text>
<text x="490.6" y="516.3" font-size="10.2" text-anchor="middle" textLength="38.63" lengthAdjust="spacingAndGlyphs" fill="#1a1a1a">0.590993</text>
<text x="558.1" y="516.3" font-size="10.2" text-anchor="middle" textLength="38.63" lengthAdjust="spacingAndGlyphs" fill="#1a1a1a">0.260132</text>
<text x="628.6" y="516.3" font-size="10.2" text-anchor="middle" textLength="33.6" lengthAdjust="spacingAndGlyphs" fill="#1a1a1a">1.34267</text>
<text x="699.1" y="516.3" font-size="10.2" text-anchor="middle" textLength="38.63" lengthAdjust="spacingAndGlyphs" fill="#1a1a1a">0.144008</text>
<text x="245.7" y="529.1" font-size="10.2" text-anchor="middle" textLength="5.15" lengthAdjust="spacingAndGlyphs" fill="#1a1a1a">2</text>
<text x="344.3" y="529.1" font-size="10.2" text-anchor="middle" textLength="49.3" lengthAdjust="spacingAndGlyphs" fill="#1a1a1a">396.441176</text>
<text x="427.2" y="529.1" font-size="10.2" text-anchor="middle" textLength="10.1" lengthAdjust="spacingAndGlyphs" fill="#1a1a1a">17</text>
<text x="201.4" y="554.6" font-size="10.2" text-anchor="start" textLength="481" lengthAdjust="spacingAndGlyphs" fill="#1a1a1a">Since the P value is within the range of (risk level/2) and 1-(risk level/2), the two gages have the same precision.</text>
<rect x="199.9" y="200.15" width="465.45" height="1.9" fill="#141414"/>
<rect x="199.9" y="250.95" width="465.45" height="1.9" fill="#141414"/>
<rect x="663.45" y="201.1" width="1.9" height="50.8" fill="#141414"/>
<rect x="199.9" y="301.55" width="536.45" height="1.9" fill="#141414"/>
<rect x="199.9" y="365.55" width="536.45" height="1.9" fill="#141414"/>
<rect x="734.45" y="302.5" width="1.9" height="64" fill="#141414"/>
<rect x="199.9" y="378.15" width="260.45" height="1.9" fill="#141414"/>
<rect x="199.9" y="416.35" width="260.45" height="1.9" fill="#141414"/>
<rect x="458.45" y="379.1" width="1.9" height="38.2" fill="#141414"/>
<rect x="199.9" y="467.15" width="536.45" height="1.9" fill="#141414"/>
<rect x="199.9" y="531.15" width="536.45" height="1.9" fill="#141414"/>
<rect x="734.45" y="468.1" width="1.9" height="64" fill="#141414"/>
<rect x="735.9" y="113.2" width="12.5" height="444.9" fill="#fff"/>
<rect x="736" y="125.4" width="12.4" height="406" fill="#d0d0d0"/>
<path d="M739.7 120.5 L742.1 117.3 L744.5 120.5 Z" fill="#555"/>
<path d="M739.9 549.8 L742.3 553 L744.7 549.8 Z" fill="#555"/>
<rect x="183.8" y="558.1" width="564.6" height="12.5" fill="#fff"/>
<rect x="197.3" y="558.2" width="450.2" height="12.4" fill="#d0d0d0"/>
<path d="M192.5 561.7 L189.2 564.3 L192.5 566.9 Z" fill="#555"/>
<path d="M728 561.7 L731.3 564.3 L728 566.9 Z" fill="#555"/>
</g>
<path d="M0 0 H750 V572 H0 Z M0.9 0.9 V570.6 H748.6 V0.9 Z" fill="#5f7b82" fill-rule="evenodd"/>
</svg>
</body></html>
